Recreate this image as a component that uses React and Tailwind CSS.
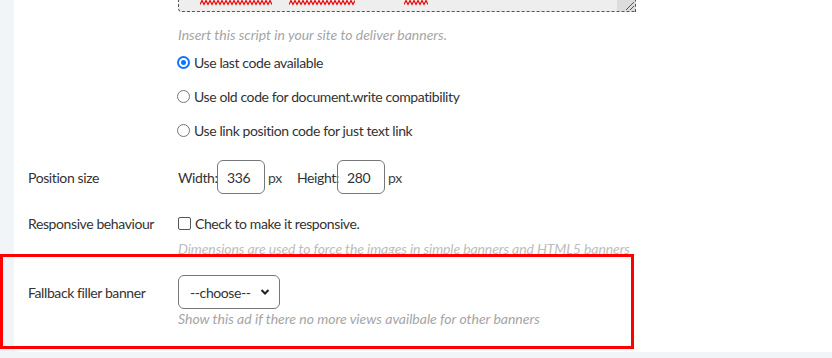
import React from 'react'

const font = { fontFamily: 'Lato, "Open Sans", sans-serif' }

function Radio({ checked, children }) {
  return (
    <label className="flex items-center h-[34px] text-[14px] tracking-[-0.4px] text-[#333]">
      {checked ? (
        <span className="w-[13px] h-[13px] rounded-full bg-[#0a75ff] flex items-center justify-center mr-[4px]">
          <span className="w-[9px] h-[9px] rounded-full border-2 border-white bg-[#0a75ff]" />
        </span>
      ) : (
        <span className="w-[13px] h-[13px] rounded-full border border-[#777] bg-white mr-[4px]" />
      )}
      {children}
    </label>
  )
}

function Squiggle({ width }) {
  const pts = []
  for (let x = 0; x <= width; x += 2) pts.push(`${x},${(x / 2) % 2 === 0 ? 4.5 : 0.5}`)
  return (
    <svg width={width} height="6" className="block">
      <polyline points={pts.join(' ')} fill="none" stroke="#ee0000" strokeWidth="1.2" />
    </svg>
  )
}

export default function App() {
  return (
    <div className="w-[832px] h-[358px] overflow-hidden bg-[#f2f5f8] relative" style={font}>
      <div className="ml-[14px] h-[352px] bg-white rounded-bl-[6px] overflow-hidden">
        {/* script textarea, top scrolled off */}
        <div className="ml-[164px] w-[458px] h-[60px] -mt-[48px] border border-dashed border-[#555] rounded-bl-[4px] bg-[#eeeeee] flex">
          <div className="flex-1 relative">
            <div className="absolute left-[21px] top-[47px] flex items-start">
              <Squiggle width={72} />
              <span className="w-[17px]" />
              <Squiggle width={66} />
              <span className="w-[49px]" />
              <Squiggle width={24} />
            </div>
          </div>
          <div className="w-[18px] bg-[#dcdcdc] flex items-end justify-end">
            <svg width="12" height="10" className="block">
              <path d="M11 1 L3 9 M11 5 L7 9" stroke="#555" strokeWidth="1" />
            </svg>
          </div>
        </div>

        <div className="ml-[164px] mt-[16px] text-[14px] italic text-[#a5a5a5] leading-[14px]">
          Insert this script in your site to deliver banners.
        </div>

        <div className="ml-[163px] mt-[3px]">
          <Radio checked>Use last code available</Radio>
          <Radio>Use old code for document.write compatibility</Radio>
          <Radio>Use link position code for just text link</Radio>
        </div>

        {/* position size */}
        <div className="flex items-center mt-[13px] h-[34px] text-[14px] tracking-[-0.4px] text-[#333]">
          <div className="w-[164px] pl-[14px]">Position size</div>
          <span className="w-[39px] whitespace-nowrap">Width:</span>
          <div className="w-[48px] h-[34px] border border-[#777] rounded-[6px] flex items-center pl-[9px]">336</div>
          <span className="ml-[3px] w-[13px] text-[#444]">px</span>
          <span className="ml-[16px] w-[40px] whitespace-nowrap">Height:</span>
          <div className="w-[48px] h-[34px] border border-[#777] rounded-[6px] flex items-center pl-[9px]">280</div>
          <span className="ml-[3px] text-[#444]">px</span>
        </div>

        {/* responsive */}
        <div className="flex items-center mt-[19px] h-[20px] text-[14px] tracking-[-0.4px] text-[#333]">
          <div className="w-[164px] pl-[14px]">Responsive behaviour</div>
          <span className="w-[13px] h-[13px] border border-[#555] rounded-[2px] bg-white mr-[4px]" />
          <span>Check to make it responsive.</span>
        </div>
        <div className="ml-[164px] mt-[9px] text-[14px] tracking-[-0.1px] italic text-[#bdbdbd] leading-[14px] whitespace-nowrap">
          Dimensions are used to force the images in simple banners and HTML5 banners
        </div>

        {/* fallback */}
        <div className="flex items-center mt-[19px] h-[34px] text-[14px] tracking-[-0.4px] text-[#333]">
          <div className="w-[164px] pl-[14px]">Fallback filler banner</div>
          <div className="w-[102px] h-[34px] border border-[#777] rounded-[6px] flex items-center pl-[11px] pr-[9px]">
            <span className="flex-1">--choose--</span>
            <svg width="10" height="8" viewBox="0 0 10 8">
              <path d="M1.5 2 L5 5.5 L8.5 2" fill="none" stroke="#222" strokeWidth="2" />
            </svg>
          </div>
        </div>
        <div className="ml-[164px] mt-[3px] text-[14px] italic text-[#a5a5a5] leading-[14px]">
          Show this ad if there no more views availbale for other banners
        </div>
      </div>

      {/* annotation overlay */}
      <div className="absolute left-0 top-[254px] w-[634px] h-[95px] border-[3px] border-[#ff0000] pointer-events-none" />
    </div>
  )
}
